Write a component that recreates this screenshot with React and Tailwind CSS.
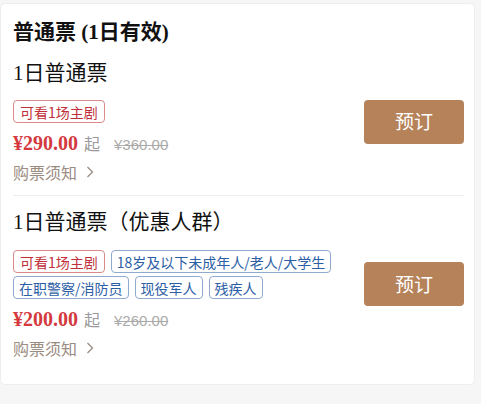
import React from "react";

const serif = { fontFamily: '"Liberation Serif", "Noto Sans CJK SC", serif' };
const sans = { fontFamily: '"Noto Sans CJK SC", sans-serif' };

function Tag({ children, red }) {
  return (
    <span
      className={
        "inline-flex items-center h-[23px] rounded-[4px] border text-[14px] leading-none whitespace-nowrap " +
        (red ? "px-[6px] border-[#d98a8a] text-[#c0303a]" : "px-[5px] border-[#8fa9cf] text-[#2c5ea6]")
      }
      style={sans}
    >
      {children}
    </span>
  );
}

function Row({ name, tags, price, orig, nameTop, gapBeforeTags, gapBeforeNotice }) {
  return (
    <div className={"flex justify-between items-center " + nameTop}>
      <div className="flex flex-col">
        <div className="text-[21px] leading-[28px] text-[#111]" style={serif}>{name}</div>
        <div className={gapBeforeTags}>{tags}</div>
        <div className="flex items-baseline mt-[8px] leading-[24px]" style={serif}>
          <span className="text-[#d4393d] font-bold text-[20px]">¥{price}</span>
          <span className="text-[#999] text-[16px] ml-[6px]" style={sans}>起</span>
          <span
            className="text-[#aaa] text-[15px] ml-[14px] line-through"
            style={{ fontFamily: '"Liberation Sans", sans-serif' }}
          >
            ¥{orig}
          </span>
        </div>
        <div className={"flex items-center text-[16px] leading-[24px] text-[#9b8c82] " + gapBeforeNotice} style={sans}>
          购票须知
          <svg width="14" height="14" viewBox="0 0 14 14" className="ml-[6px]">
            <path d="M4.5 2 L9.5 7 L4.5 12" fill="none" stroke="#9b8c82" strokeWidth="1.3" />
          </svg>
        </div>
      </div>
      <button
        className="w-[100px] h-[44px] rounded-[4px] bg-[#b5825a] text-white text-[19px] shrink-0"
        style={sans}
      >
        预订
      </button>
    </div>
  );
}

export default function App() {
  return (
    <div className="w-[481px] h-[404px] bg-[#f6f6f6] pt-[3px]">
      <div className="w-[475px] bg-white rounded-[5px] border border-[#eeeeee] pl-[12px] pr-[10px] pt-[14px] pb-[24px]">
        <div className="text-[21px] font-bold leading-[28px] text-[#111]" style={serif}>
          普通票 (1日有效)
        </div>
        <Row
          name="1日普通票"
          nameTop="mt-[13px]"
          gapBeforeTags="mt-[13px]"
          gapBeforeNotice="mt-[3px]"
          tags={
            <div className="flex">
              <Tag red>可看1场主剧</Tag>
            </div>
          }
          price="290.00"
          orig="360.00"
        />
        <div className="h-px bg-[#eeeeee] mt-[11px]" />
        <Row
          name="1日普通票（优惠人群）"
          nameTop="mt-[12px]"
          gapBeforeTags="mt-[14px]"
          gapBeforeNotice="mt-[3px]"
          tags={
            <div className="flex flex-wrap gap-x-[6px] gap-y-[3px] w-[330px]">
              <Tag red>可看1场主剧</Tag>
              <Tag>18岁及以下未成年人/老人/大学生</Tag>
              <Tag>在职警察/消防员</Tag>
              <Tag>现役军人</Tag>
              <Tag>残疾人</Tag>
            </div>
          }
          price="200.00"
          orig="260.00"
        />
      </div>
    </div>
  );
}
